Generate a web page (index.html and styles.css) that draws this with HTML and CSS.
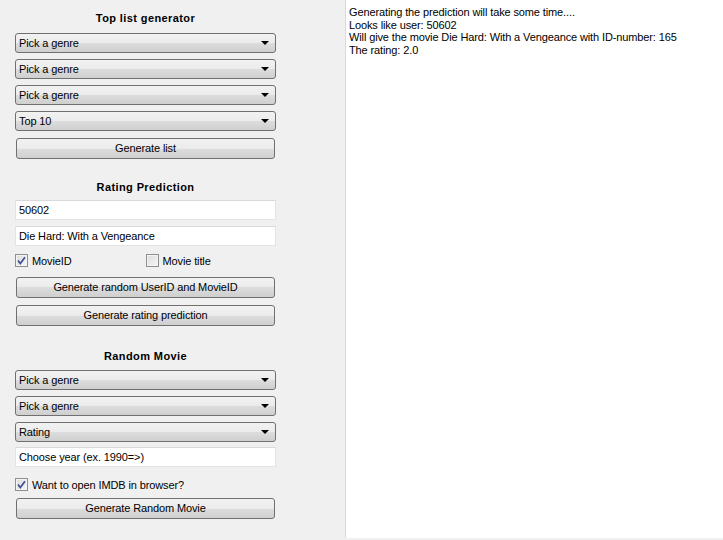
FILE: index.html
```html
<!DOCTYPE html>
<html>
<head>
<meta charset="utf-8">
<link rel="stylesheet" href="styles.css">
</head>
<body>
<div class="app">
  <div class="panel">
    <div class="title t1">Top list generator</div>
    <div class="combo c-first">Pick a genre<span class="arrow"></span></div>
    <div class="combo">Pick a genre<span class="arrow"></span></div>
    <div class="combo">Pick a genre<span class="arrow"></span></div>
    <div class="combo">Top 10<span class="arrow"></span></div>
    <div class="button b-after">Generate list</div>

    <div class="title t2">Rating Prediction</div>
    <div class="input i-first">50602</div>
    <div class="input">Die Hard: With a Vengeance</div>
    <div class="checkrow">
      <label class="check"><span class="box checked"><svg viewBox="0 0 13 13" width="13" height="13"><path d="M3 6.5 L5.3 9.5 L10 3.2" fill="none" stroke="#3d5592" stroke-width="1.8"/></svg></span>MovieID</label>
      <label class="check"><span class="box"></span>Movie title</label>
    </div>
    <div class="button b-after2">Generate random UserID and MovieID</div>
    <div class="button b-next">Generate rating prediction</div>

    <div class="title t3">Random Movie</div>
    <div class="combo c-first">Pick a genre<span class="arrow"></span></div>
    <div class="combo">Pick a genre<span class="arrow"></span></div>
    <div class="combo">Rating<span class="arrow"></span></div>
    <div class="input i-year">Choose year (ex. 1990=&gt;)</div>
    <div class="checkrow cr2">
      <label class="check wide"><span class="box checked"><svg viewBox="0 0 13 13" width="13" height="13"><path d="M3 6.5 L5.3 9.5 L10 3.2" fill="none" stroke="#3d5592" stroke-width="1.8"/></svg></span>Want to open IMDB in browser?</label>
    </div>
    <div class="button b-last">Generate Random Movie</div>
  </div>
  <div class="output">
    <div>Generating the prediction will take some time....</div>
    <div>Looks like user: 50602</div>
    <div>Will give the movie Die Hard: With a Vengeance with ID-number: 165</div>
    <div>The rating: 2.0</div>
  </div>
</div>
</body>
</html>
```
FILE: styles.css
```css
* { box-sizing: border-box; }
html, body {
  margin: 0;
  padding: 0;
  background: #f0f0f0;
  font-family: "Liberation Sans", Arial, sans-serif;
  font-size: 11px;
  letter-spacing: -0.12px;
  color: #000;
}
.app {
  display: flex;
  width: 723px;
  height: 540px;
}
.panel {
  width: 345px;
  padding: 0 69px 0 15px;
  display: flex;
  flex-direction: column;
  background: #f0f0f0;
}
.title {
  font-weight: bold;
  text-align: center;
  height: 13px;
  line-height: 13px;
  letter-spacing: 0.4px;
}
.t1 { margin-top: 12px; }
.t2 { margin-top: 22px; }
.t3 { margin-top: 24px; }

.combo {
  position: relative;
  height: 20px;
  line-height: 18px;
  padding-left: 3px;
  border: 1px solid #707070;
  border-radius: 3px;
  background: linear-gradient(to bottom, #f2f2f2 0%, #ebebeb 50%, #dddddd 50%, #cfcfcf 100%);
  margin-top: 6px;
}
.combo.c-first { margin-top: 8px; }
.t3 + .combo { margin-top: 7px; }
.arrow {
  position: absolute;
  right: 6px;
  top: 7px;
  width: 0;
  height: 0;
  border-left: 4px solid transparent;
  border-right: 4px solid transparent;
  border-top: 4px solid #000;
}
.button {
  height: 21px;
  line-height: 19px;
  margin-left: 1px;
  margin-right: 1px;
  text-align: center;
  border: 1px solid #707070;
  border-radius: 3px;
  background: linear-gradient(to bottom, #f2f2f2 0%, #ebebeb 50%, #dddddd 50%, #cfcfcf 100%);
}
.b-after { margin-top: 7px; }
.b-after2 { margin-top: 8px; }
.b-next { margin-top: 7px; }
.b-last { margin-top: 5px; }

.input {
  height: 20px;
  line-height: 18px;
  padding-left: 3px;
  background: #fff;
  border: 1px solid #e3e3e3;
  border-top-color: #d9d9d9;
  margin-top: 6px;
}
.input.i-first { margin-top: 6px; }
.input.i-year { margin-top: 5px; }

.checkrow {
  display: flex;
  height: 17px;
  margin-top: 6px;
  align-items: center;
}
.cr2 { margin-top: 9px; }
.check {
  display: flex;
  align-items: center;
  gap: 4px;
  width: 135px;
}
.check.wide { width: auto; }
.box {
  width: 13px;
  height: 13px;
  border: 1px solid #8e8f8f;
  background: linear-gradient(135deg, #dcdcdc 0%, #f7f7f7 100%);
  box-shadow: inset 0 0 0 1px #f4f4f4;
  position: relative;
  flex: none;
}
.box svg {
  position: absolute;
  left: -1px;
  top: -1px;
}
.output {
  flex: 1;
  background: #fff;
  border-left: 1px solid #dadada;
  padding: 6px 3px;
  line-height: 12.7px;
  height: 538px;
}
```
